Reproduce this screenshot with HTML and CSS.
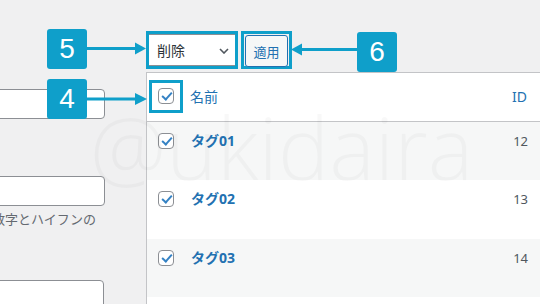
FILE: index.html
```html
<!DOCTYPE html>
<html lang="ja">
<head>
<meta charset="utf-8">
<title>タグ一括操作</title>
<link rel="stylesheet" href="styles.css">
</head>
<body>
<div class="page">
  <div class="left">
    <div class="field f1"><div class="input"></div></div>
    <div class="field f2">
      <div class="input"></div>
      <div class="desc"><span>英数字とハイフンの</span></div>
    </div>
    <div class="field f3"><div class="input"></div></div>
  </div>
  <div class="right">
    <div class="tablenav">
      <div class="hl hl-select">
        <div class="select">
          <span>削除</span>
          <svg class="chev" width="10" height="6" viewBox="0 0 10 6"><path d="M1 1l4 4 4-4" fill="none" stroke="#50575e" stroke-width="1.6"/></svg>
        </div>
      </div>
      <div class="hl hl-btn"><div class="button">適用</div></div>
    </div>
    <div class="table">
      <div class="row head">
        <div class="cb"><span class="check"></span><span class="hl hl-cb"></span></div>
        <div class="name">名前</div>
        <div class="id idhead">ID</div>
      </div>
      <div class="row alt">
        <div class="cb"><span class="check"></span></div>
        <div class="name"><a>タグ01</a></div>
        <div class="id">12</div>
      </div>
      <div class="row tall">
        <div class="cb"><span class="check"></span></div>
        <div class="name"><a>タグ02</a></div>
        <div class="id">13</div>
      </div>
      <div class="row alt">
        <div class="cb"><span class="check"></span></div>
        <div class="name"><a>タグ03</a></div>
        <div class="id">14</div>
      </div>
    </div>
  </div>
</div>

<div class="watermark">@ukidaira</div>

<div class="badge b5">5</div>
<div class="badge b4">4</div>
<div class="badge b6">6</div>
<svg class="arrows" width="540" height="304" viewBox="0 0 540 304">
  <rect x="86" y="47" width="50" height="3" fill="#0f9fca"/>
  <polygon points="135,42.5 146,48.5 135,54.5" fill="#0f9fca"/>
  <rect x="86" y="97.5" width="50" height="3" fill="#0f9fca"/>
  <polygon points="135,93 147,99 135,105" fill="#0f9fca"/>
  <rect x="301" y="48" width="57" height="3" fill="#0f9fca"/>
  <polygon points="302,43.5 291,49.5 302,55.5" fill="#0f9fca"/>
</svg>
</body>
</html>
```
FILE: styles.css
```css
html, body {
  margin: 0;
  padding: 0;
}
body {
  width: 540px;
  height: 304px;
  overflow: hidden;
  background: #f0f0f1;
  font-family: "Noto Sans", "Noto Sans CJK JP", sans-serif;
  color: #2c3338;
  position: relative;
}
.page {
  display: flex;
  height: 304px;
}
.left {
  width: 146px;
  flex: none;
  overflow: hidden;
}
.field .input {
  margin-left: -20px;
  width: 123px;
  height: 28px;
  background: #fff;
  border: 1px solid #8c8f94;
  border-radius: 4px;
}
.f1 { padding-top: 89px; }
.f2 { padding-top: 57px; }
.f3 { padding-top: 50px; }
.f3 .input { width: 122px; height: 40px; }
.desc {
  width: 96px;
  display: flex;
  justify-content: flex-end;
  margin-top: 2px;
  font-size: 13px;
  line-height: 22px;
  color: #646970;
  white-space: nowrap;
}
.right {
  flex: 1;
  padding-top: 31px;
  min-width: 0;
}
.tablenav {
  display: flex;
  gap: 3px;
  height: 38px;
}
.hl {
  border: 3px solid #0f9fca;
  box-sizing: border-box;
}
.hl-select {
  width: 92px;
  height: 38px;
  overflow: hidden;
}
.select {
  height: 30px;
  margin: 0 -2px;
  border-top: 1px solid #8c8f94;
  border-bottom: 1px solid #8c8f94;
  background: #fff;
  display: flex;
  align-items: center;
  justify-content: space-between;
  padding: 0 8px 0 10px;
  font-size: 14px;
  color: #2c3338;
}
.chev { margin-top: 1px; }
.hl-btn {
  width: 51px;
  height: 38px;
  padding: 0 1px;
}
.button {
  height: 30px;
  margin-top: 1px;
  border: 1px solid #2271b1;
  border-radius: 3px;
  background: #f6f7f7;
  color: #2271b1;
  font-size: 13px;
  display: flex;
  align-items: center;
  justify-content: center;
}
.table {
  margin-top: 3px;
  border-left: 1px solid #c3c4c7;
  background: #fff;
  height: 240px;
}
.row {
  display: flex;
  align-items: flex-start;
  height: 58px;
  box-sizing: border-box;
  background: #fff;
}
.row.alt { background: #f6f7f7; }
.row.tall { height: 59px; }
.row.head {
  height: 50px;
  border-top: 1px solid #c3c4c7;
  border-bottom: 1px solid #c3c4c7;
}
.cb {
  width: 43px;
  box-sizing: border-box;
  flex: none;
  padding: 11px 0 0 11px;
  position: relative;
}
.head .cb { padding-top: 15px; }
.check {
  display: block;
  width: 16px;
  height: 16px;
  box-sizing: border-box;
  border: 1px solid #8c8f94;
  border-radius: 4px;
  background: #fff;
  position: relative;
}
.check::after {
  content: "";
  position: absolute;
  width: 8px;
  height: 4px;
  border-left: 2.6px solid #3582c4;
  border-bottom: 2.6px solid #3582c4;
  transform: rotate(-48deg);
  transform-origin: 50% 50%;
  left: 2.5px;
  top: 3px;
}
.hl-cb {
  position: absolute;
  left: 2px;
  top: 7px;
  width: 34px;
  height: 33px;
}
.name {
  flex: 1;
  font-size: 14px;
  line-height: 20px;
  padding-top: 9px;
}
.head .name {
  color: #2271b1;
  padding-top: 14px;
}
.name a {
  color: #2271b1;
  font-weight: bold;
  margin-left: 1px;
}
.id {
  padding: 9px 12px 0 0;
  font-size: 13px;
  line-height: 20px;
  color: #50575e;
}
.head .id {
  color: #2271b1;
  font-size: 14px;
  padding-top: 14px;
  padding-right: 13px;
}
.watermark {
  position: absolute;
  left: 90px;
  top: 92px;
  font-family: "Open Sans", sans-serif;
  font-weight: 300;
  font-size: 86px;
  line-height: 110px;
  color: rgba(0, 0, 0, 0.028);
  white-space: nowrap;
  pointer-events: none;
}
.badge {
  position: absolute;
  width: 40px;
  height: 40px;
  background: #0f9fca;
  border-radius: 3px;
  color: #fff;
  font-family: "Liberation Sans", Arial, sans-serif;
  font-size: 28px;
  line-height: 40px;
  text-align: center;
}
.b5 { left: 47px; top: 29px; }
.b4 { left: 47px; top: 79px; }
.b6 { left: 357px; top: 32px; }
.arrows {
  position: absolute;
  left: 0;
  top: 0;
  pointer-events: none;
}
```
